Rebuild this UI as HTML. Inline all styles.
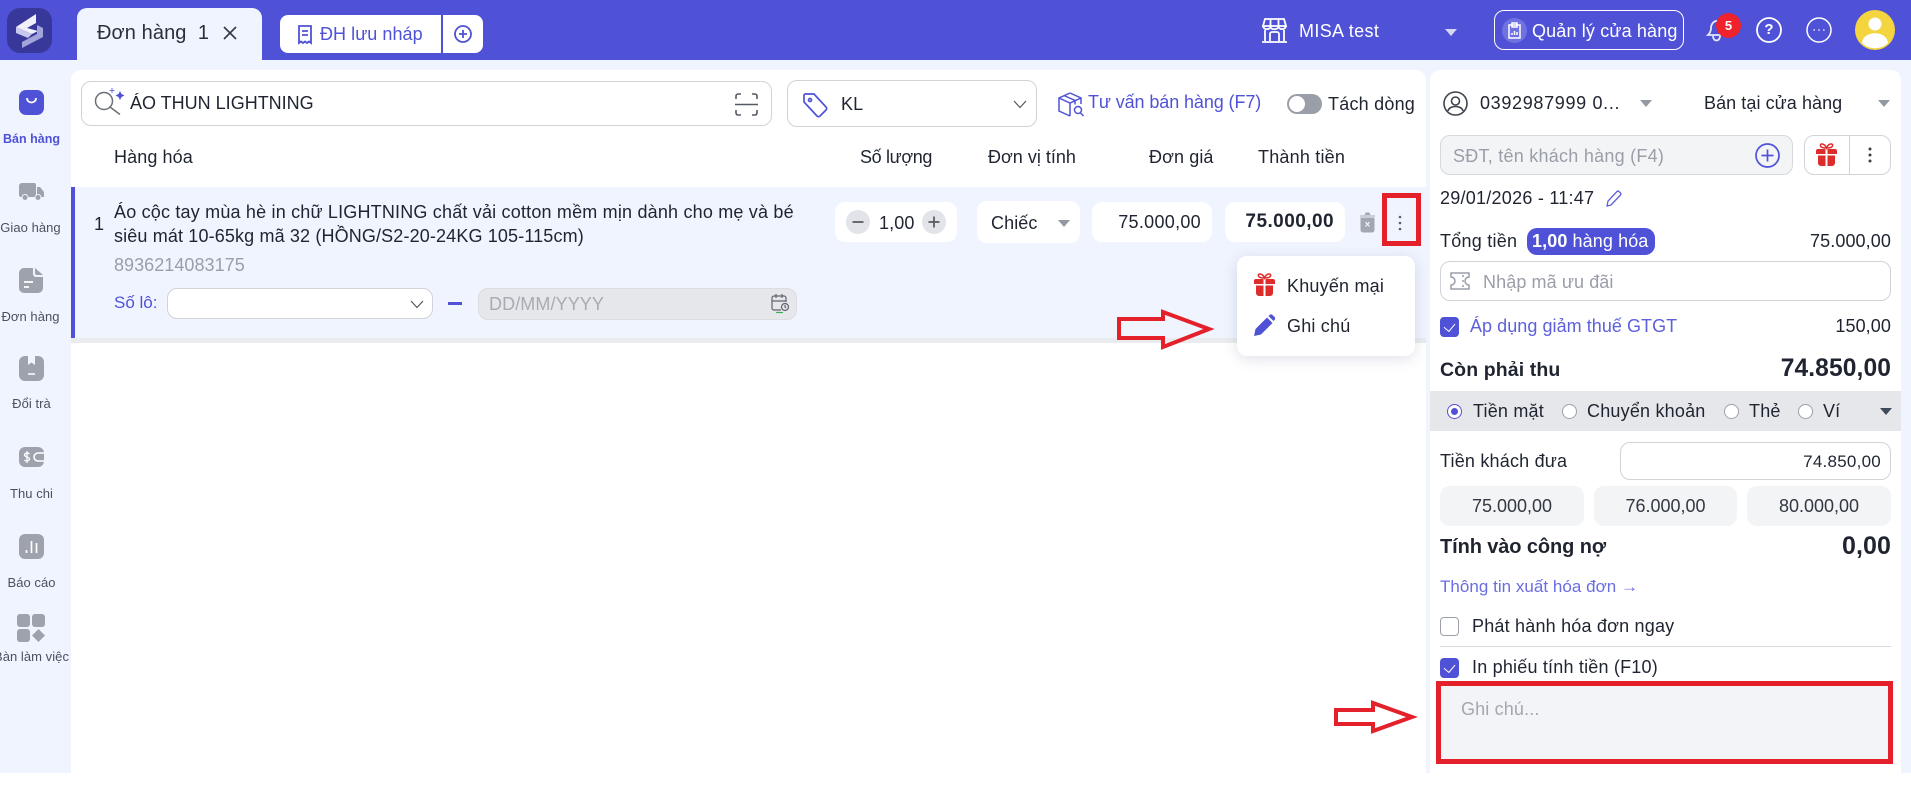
<!DOCTYPE html>
<html lang="vi"><head><meta charset="utf-8"><title>Đơn hàng</title>
<style>
*{box-sizing:border-box}
html,body{margin:0;padding:0;width:1911px;height:802px;overflow:hidden;background:#fff}
body{position:relative;font-family:"Liberation Sans",sans-serif;color:#1f2430;font-size:18px}
.b{position:absolute}
.t{position:absolute;white-space:nowrap;line-height:20px;height:20px;margin-top:-10px;letter-spacing:.1px}
.r{text-align:right}
.s{position:absolute;font-size:13px;letter-spacing:.05px;color:#4b5060;width:71px;text-align:center;line-height:16px;margin-top:-8px;white-space:nowrap}
svg.i{position:absolute;overflow:visible;fill:none}
.w{background:#fff;border-radius:10px}
.inp{background:#fff;border:1px solid #d1d3d8;border-radius:10px}
.q{background:#f3f4f6;border-radius:10px;text-align:center;line-height:40px;top:486px;height:40px;color:#333842}
.chk{position:absolute;width:19px;height:20px;border-radius:4px;background:#4f52d7}
.chk:after{content:"";position:absolute;left:6px;top:4px;width:6px;height:9px;border:solid #fff;border-width:0 1.3px 1.3px 0;transform:rotate(40deg)}
.rad{position:absolute;width:15px;height:15px;border-radius:50%;border:1px solid #9ca0a8;background:#fff;top:404px}
.car{position:absolute;width:0;height:0;border-left:6px solid transparent;border-right:6px solid transparent;border-top:7px solid #9398a3}
.p{color:#4f52d7}.g{color:#9a9ea8}
</style></head><body>
<!-- backgrounds -->
<div class="b" style="left:0;top:0;width:1911px;height:773px;background:#eff4fe"></div>
<div class="b" style="left:0;top:0;width:1911px;height:60px;background:#4f52d7"></div>

<!-- logo -->
<svg class="i" style="left:7px;top:8px" width="45" height="45" viewBox="0 0 45 45"><rect width="45" height="45" rx="13" fill="#38389b"/><path d="M9 19 29 6v9l-9 5 11 3-6 3-16-7z" fill="#f0f0fb"/><path d="M9 19v6l12 5 4-4z" fill="#c9c9ef"/><path d="M15 34v6l21-11v-9l-6-3v9z" fill="#a4a4dd"/></svg>

<!-- tabs -->
<div class="b" style="left:77px;top:8px;width:185px;height:52px;background:#eff4fe;border-radius:10px 10px 0 0"></div>
<div class="t" style="left:97px;top:33px;font-size:20px;color:#2b2f3a">Đơn hàng&nbsp; 1</div>
<svg class="i" style="left:223px;top:26px" width="14" height="14"><path d="M1 1l12 12M13 1 1 13" stroke="#333842" stroke-width="1.6"/></svg>
<div class="b w" style="left:280px;top:15px;width:161px;height:38px;border-radius:8px 0 0 8px"></div>
<div class="b w" style="left:443px;top:15px;width:40px;height:38px;border-radius:0 8px 8px 0"></div>
<svg class="i" style="left:298px;top:25px" width="14" height="20" stroke="#4f52d7" stroke-width="1.8"><path d="M1 1h12v17l-2-1.500-2 1.500-2-1.500-2 1.500-2-1.500-2 1.500zM4 6h6M4 10h6"/></svg>
<div class="t p" style="left:320px;top:34px;letter-spacing:.05px">ĐH lưu nháp</div>
<svg class="i" style="left:454px;top:25px" width="18" height="18" stroke="#4f52d7" stroke-width="1.8"><circle cx="9" cy="9" r="8"/><path d="M9 5v8M5 9h8"/></svg>

<!-- header right -->
<svg class="i" style="left:1262px;top:18px" width="25" height="25" viewBox="0 0 25 25" stroke="#fff" stroke-width="1.8"><path d="M3 1h19l2 7H1zM1 8c1 4 6 4 7.500 1 1 3 6.500 3 8 0 1.500 3 6.500 3 7.500-1M3 12v11M22 12v11M0 24h25M8 23v-7a2 2 0 0 1 2-2h5a2 2 0 0 1 2 2v7M8.500 1v8M16.500 1v8"/></svg>
<div class="t" style="left:1299px;top:31px;color:#fff;letter-spacing:.35px">MISA test</div>
<div class="car" style="left:1445px;top:29px;border-top-color:#d5d6f5"></div>
<div class="b" style="left:1494px;top:10px;width:190px;height:40px;border:1.500px solid #fff;border-radius:10px"></div>
<svg class="i" style="left:1502px;top:18px" width="25" height="25" viewBox="0 0 25 25"><circle cx="12.500" cy="12.500" r="12.500" fill="#6f72e0"/><path d="M7 7h11v13H7zM10 5h5v4h-5zM10 17v-2M12.500 17v-4M15 17v-3" stroke="#fff" stroke-width="1.500"/></svg>
<div class="t" style="left:1532px;top:31px;color:#fff;letter-spacing:.15px">Quản lý cửa hàng</div>
<svg class="i" style="left:1706px;top:19px" width="22" height="22" stroke="#e8e9fb" stroke-width="1.800"><path d="M2 16c2-2 3-4 3-7s2-7 6-7 6 4 6 7 0 5 2 7zM7 17c0 6 7 6 7 0"/></svg>
<div class="b" style="left:1716px;top:13px;width:25px;height:25px;border-radius:50%;background:#f0222c;color:#fff;font-weight:700;font-size:13px;line-height:25px;text-align:center">5</div>
<svg class="i" style="left:1756px;top:17px" width="26" height="26" stroke="#fff" stroke-width="1.800"><circle cx="13" cy="13" r="12"/></svg>
<div class="t" style="left:1764px;top:30px;width:10px;text-align:center;color:#fff;font-weight:700;font-size:15px">?</div>
<svg class="i" style="left:1806px;top:17px" width="26" height="26" stroke="#fff" stroke-width="1.500"><circle cx="13" cy="13" r="12"/><path d="M7.500 13h1.300M12.400 13h1.300M17.200 13h1.300"/></svg>
<svg class="i" style="left:1855px;top:10px" width="40" height="40" viewBox="0 0 40 40"><circle cx="20" cy="20" r="20" fill="#f5d53f"/><circle cx="20" cy="14" r="6.500" fill="#fff"/><path d="M7 33c1-13 25-13 26 0-7 7-19 7-26 0z" fill="#fff"/></svg>

<!-- sidebar -->
<svg class="i" style="left:19px;top:90px" width="25" height="25"><rect width="25" height="25" rx="7" fill="#4f52d7"/><path d="M8 8c0 6 9 6 9 0" stroke="#fff" stroke-width="1.800"/></svg>
<div class="s" style="left:-4px;top:139px;color:#4f52d7;font-weight:700;font-size:12.5px;letter-spacing:0">Bán hàng</div>
<svg class="i" style="left:19px;top:183px" width="25" height="18"><path d="M0 3a3 3 0 0 1 3-3h12a2 2 0 0 1 2 2v12H2a2 2 0 0 1-2-2zM18 4h3l4 5v5h-7z" fill="#9ea2ad"/><circle cx="6" cy="14.500" r="3" fill="#9ea2ad" stroke="#eff4fe"/><circle cx="19" cy="14.500" r="3" fill="#9ea2ad" stroke="#eff4fe"/></svg>
<div class="s" style="left:-5px;top:228px">Giao hàng</div>
<svg class="i" style="left:19px;top:268px" width="25" height="25"><path d="M5 0h9v6a3 3 0 0 0 3 3h7v11a5 5 0 0 1-5 5H5a5 5 0 0 1-5-5V5a5 5 0 0 1 5-5z" fill="#9ea2ad"/><path d="M16 0l8 7h-6a2 2 0 0 1-2-2z" fill="#9ea2ad"/><path d="M5 14h9M5 19h5" stroke="#fff" stroke-width="1.800"/></svg>
<div class="s" style="left:-5px;top:317px">Đơn hàng</div>
<svg class="i" style="left:19px;top:356px" width="25" height="25"><rect width="25" height="25" rx="6" fill="#9ea2ad"/><path d="M9 0h7v9l-3.500-2.500L9 9z" fill="#eff4fe"/><path d="M9 18h7" stroke="#fff" stroke-width="1.500"/></svg>
<div class="s" style="left:-4px;top:404px">Đổi trà</div>
<svg class="i" style="left:19px;top:447px" width="25" height="20"><rect width="25" height="20" rx="6" fill="#9ea2ad"/><path d="M25 6h-6a4 4 0 0 0 0 8h6" stroke="#fff" stroke-width="1.600"/><path d="M8 4v12M10.500 7c-1-1.500-5-1-5 1s5 2 5 4-4 2.500-5 1" stroke="#fff" stroke-width="1.300"/></svg>
<div class="s" style="left:-4px;top:494px">Thu chi</div>
<svg class="i" style="left:19px;top:534px" width="25" height="25"><rect width="25" height="25" rx="6" fill="#9ea2ad"/><path d="M7.500 19v-3M12.500 19V7M17.500 19V9" stroke="#fff" stroke-width="1.700"/></svg>
<div class="s" style="left:-4px;top:583px">Báo cáo</div>
<svg class="i" style="left:17px;top:614px" width="28" height="28"><rect width="13" height="13" rx="3" fill="#9ea2ad"/><rect x="15" width="13" height="13" rx="3" fill="#9ea2ad"/><rect y="15" width="13" height="13" rx="3" fill="#9ea2ad"/><path d="M21.500 15l6.500 6.500-6.500 6.500-6.500-6.500z" fill="#9ea2ad"/></svg>
<div class="s" style="left:-4px;top:657px;overflow:hidden;direction:rtl;width:73px"><span style="direction:ltr;unicode-bidi:embed">Bàn làm việc</span></div>

<!-- main card -->
<div class="b" style="left:71px;top:70px;width:1355px;height:703px;background:#fff;border-radius:10px 10px 0 0"></div>

<!-- search row -->
<div class="b inp" style="left:81px;top:81px;width:691px;height:45px"></div>
<svg class="i" style="left:94px;top:88px" width="30" height="30" stroke="#6b6f78" stroke-width="1.500"><circle cx="10" cy="13" r="8.500"/><path d="M16 19l10 7.500"/><path d="M18 0v5M15.500 2.500h5" stroke="#6f72e0" stroke-width="1"/><path d="M26 3l1.500 3 3 1.500-3 1.500-1.500 3-1.500-3-3-1.500 3-1.500z" fill="#4f52d7" stroke="none"/></svg>
<div class="t" style="left:130px;top:103px;letter-spacing:0">ÁO THUN LIGHTNING</div>
<svg class="i" style="left:735px;top:93px" width="23" height="23" stroke="#555963" stroke-width="1.600"><path d="M1 6V3a2 2 0 0 1 2-2h3M17 1h3a2 2 0 0 1 2 2v3M1 17v3a2 2 0 0 0 2 2h3M17 22h3a2 2 0 0 0 2-2v-3M0 11.500h23"/></svg>
<div class="b inp" style="left:787px;top:80px;width:250px;height:47px"></div>
<svg class="i" style="left:803px;top:93px" width="25" height="25" stroke="#4f52d7" stroke-width="1.700"><path d="M2 1h9l12 13a2 2 0 0 1 0 3l-6 6a2 2 0 0 1-3 0L2 10a2 2 0 0 1-1-2V2z"/><circle cx="7" cy="7" r="1.500"/></svg>
<div class="t" style="left:841px;top:104px">KL</div>
<svg class="i" style="left:1013px;top:100px" width="14" height="9" stroke="#555963" stroke-width="1.200"><path d="M1 1l6 6.500L13 1"/></svg>
<svg class="i" style="left:1058px;top:92px" width="27" height="25" stroke="#4f52d7" stroke-width="1.500"><path d="M12 1 1 6v13l11 5M12 1l11 5v6M1 6l11 5 11-5M12 11v13M6 3.500l11 5v4"/><circle cx="20" cy="18" r="3.500"/><path d="M22.500 21l3 3"/></svg>
<div class="t p" style="left:1088px;top:102px;letter-spacing:-.1px">Tư vấn bán hàng (F7)</div>
<div class="b" style="left:1287px;top:94px;width:35px;height:20px;border-radius:10px;background:#9a9ea8"></div>
<div class="b" style="left:1289px;top:96px;width:16px;height:16px;border-radius:50%;background:#fff"></div>
<div class="t" style="left:1328px;top:104px;letter-spacing:.22px">Tách dòng</div>

<!-- table header -->
<div class="t" style="left:114px;top:157px">Hàng hóa</div>
<div class="t" style="left:860px;top:157px;letter-spacing:-.35px">Số lượng</div>
<div class="t" style="left:988px;top:157px;letter-spacing:0">Đơn vị tính</div>
<div class="t" style="left:1149px;top:157px">Đơn giá</div>
<div class="t" style="left:1258px;top:157px;letter-spacing:.2px">Thành tiền</div>

<!-- row -->
<div class="b" style="left:71px;top:187px;width:1355px;height:151px;background:#eff4fe"></div>
<div class="b" style="left:71px;top:187px;width:4px;height:151px;background:#4f52d7"></div>
<div class="b" style="left:71px;top:338px;width:1355px;height:5px;background:#eaebee"></div>
<div class="t" style="left:94px;top:224px">1</div>
<div class="t" style="left:114px;top:212px;letter-spacing:.19px">Áo cộc tay mùa hè in chữ LIGHTNING chất vải cotton mềm mịn dành cho mẹ và bé</div>
<div class="t" style="left:114px;top:236px;letter-spacing:.14px">siêu mát 10-65kg mã 32 (HỒNG/S2-20-24KG 105-115cm)</div>
<div class="t g" style="left:114px;top:265px;letter-spacing:.05px">8936214083175</div>
<div class="t p" style="left:114px;top:303px;font-size:17px;letter-spacing:0">Số lô:</div>
<div class="b inp" style="left:167px;top:288px;width:266px;height:31px"></div>
<svg class="i" style="left:410px;top:300px" width="14" height="9" stroke="#555963" stroke-width="1.200"><path d="M1 1l6 6.500L13 1"/></svg>
<div class="b" style="left:448px;top:302px;width:14px;height:2.500px;background:#4f52d7"></div>
<div class="b" style="left:478px;top:288px;width:319px;height:32px;background:#e6e7eb;border:1px solid #dcdde1;border-radius:10px"></div>
<div class="t" style="left:489px;top:304px;color:#a8abb3">DD/MM/YYYY</div>
<svg class="i" style="left:771px;top:294px" width="19" height="20" stroke="#5f636c" stroke-width="1.200"><path d="M10 16H3a2 2 0 0 1-2-2V4a2 2 0 0 1 2-2h10a2 2 0 0 1 2 2v4M1 7h14M5 0v4M11 0v4"/><circle cx="14" cy="13" r="3.500"/><path d="M14 11v2l1 1"/><path d="M5 18.500h7" stroke="#3fae5a"/></svg>

<div class="b w" style="left:835px;top:202px;width:122px;height:40px"></div>
<div class="b" style="left:846px;top:210px;width:24px;height:24px;border-radius:50%;background:#e2e4e9"></div>
<div class="b" style="left:922px;top:210px;width:24px;height:24px;border-radius:50%;background:#e2e4e9"></div>
<svg class="i" style="left:846px;top:210px" width="100" height="24" stroke="#555963" stroke-width="1.700"><path d="M6.500 12h11M82.500 12h11M88 6.500v11"/></svg>
<div class="t" style="left:879px;top:223px">1,00</div>
<div class="b w" style="left:977px;top:201px;width:103px;height:42px"></div>
<div class="t" style="left:991px;top:223px">Chiếc</div>
<div class="car" style="left:1058px;top:220px"></div>
<div class="b w" style="left:1092px;top:202px;width:120px;height:40px"></div>
<div class="t r" style="right:710px;top:222px;letter-spacing:.3px">75.000,00</div>
<div class="b w" style="left:1225px;top:202px;width:120px;height:40px"></div>
<div class="t r" style="right:577px;top:222px;font-weight:700;font-size:19px;letter-spacing:.45px">75.000,00</div>
<svg class="i" style="left:1360px;top:213px" width="15" height="19"><path d="M1 5h13v12a2 2 0 0 1-2 2H3a2 2 0 0 1-2-2zM0 3h15M5 2l1-2h3l1 2" fill="#a3a7b2" stroke="#a3a7b2"/><path d="M5.500 9l4 4.500M9.500 9l-4 4.500" stroke="#eff4fe" stroke-width="1.200"/></svg>
<svg class="i" style="left:1398px;top:215px" width="4" height="16"><circle cx="2" cy="2" r="1.300" fill="#5a5f6a"/><circle cx="2" cy="8" r="1.300" fill="#5a5f6a"/><circle cx="2" cy="14" r="1.300" fill="#5a5f6a"/></svg>

<!-- right panel -->
<div class="b" style="left:1430px;top:70px;width:471px;height:703px;background:#fff;border-radius:10px 10px 0 0"></div>
<svg class="i" style="left:1443px;top:91px" width="25" height="25" stroke="#3f444e" stroke-width="1.600"><circle cx="12.500" cy="12.500" r="11.500"/><circle cx="12.500" cy="10" r="4"/><path d="M5 20c1-6 14-6 15 0"/></svg>
<div class="t" style="left:1480px;top:103px;letter-spacing:.67px">0392987999 0...</div>
<div class="car" style="left:1640px;top:100px"></div>
<div class="t" style="left:1704px;top:103px;letter-spacing:.07px">Bán tại cửa hàng</div>
<div class="car" style="left:1878px;top:100px"></div>

<div class="b" style="left:1440px;top:135px;width:353px;height:40px;background:#f3f4f6;border:1px solid #d6d8dc;border-radius:10px"></div>
<div class="t g" style="left:1453px;top:156px;letter-spacing:.25px">SĐT, tên khách hàng (F4)</div>
<svg class="i" style="left:1755px;top:143px" width="25" height="25" stroke="#4f52d7" stroke-width="1.700"><circle cx="12.500" cy="12.500" r="11.500"/><path d="M12.500 6.500v12M6.500 12.500h12"/></svg>
<div class="b inp" style="left:1804px;top:135px;width:87px;height:40px"></div>
<div class="b" style="left:1849px;top:135px;width:1px;height:40px;background:#d1d3d8"></div>
<svg class="i" style="left:1816px;top:143px" width="21" height="23"><path d="M2 6h17a2 2 0 0 1 2 2v3H0V8a2 2 0 0 1 2-2zM2 12.500h17V20a3 3 0 0 1-3 3H5a3 3 0 0 1-3-3z" fill="#dd2c2c"/><path d="M10.500 6v17" stroke="#fff" stroke-width="2"/><path d="M10.500 5c-2-5-7-5-6-2 .5 1.500 3 2 6 2 3 0 5.500-.5 6-2 1-3-4-3-6 2z" stroke="#dd2c2c" stroke-width="1.500"/></svg>
<svg class="i" style="left:1868px;top:147px" width="4" height="16"><circle cx="2" cy="2" r="1.500" fill="#3a3f4a"/><circle cx="2" cy="8" r="1.500" fill="#3a3f4a"/><circle cx="2" cy="14" r="1.500" fill="#3a3f4a"/></svg>

<div class="t" style="left:1440px;top:198px;letter-spacing:.25px">29/01/2026 - 11:47</div>
<svg class="i" style="left:1606px;top:190px" width="16" height="17" stroke="#5d60db" stroke-width="1.300"><path d="M1 16l1-5L11 1.500a1.500 1.500 0 0 1 2 0l1.500 1.500a1.500 1.500 0 0 1 0 2L5 15z"/></svg>

<div class="t" style="left:1440px;top:241px;letter-spacing:.25px">Tổng tiền</div>
<div class="b" style="left:1527px;top:228px;width:128px;height:27px;background:#4f52d7;border-radius:10px"></div>
<div class="t" style="left:1532px;top:241px;color:#fff"><b>1,00</b> hàng hóa</div>
<div class="t r" style="right:20px;top:241px">75.000,00</div>
<div class="b inp" style="left:1440px;top:261px;width:451px;height:40px"></div>
<svg class="i" style="left:1450px;top:272px" width="20" height="18" stroke="#9a9ea8" stroke-width="1.500"><path d="M1 1h18v4a4 4 0 0 0 0 8v4H1v-4a4 4 0 0 0 0-8zM13 3v2M13 8v2M13 13v2"/></svg>
<div class="t g" style="left:1483px;top:282px">Nhập mã ưu đãi</div>

<div class="chk" style="left:1440px;top:317px"></div>
<div class="t" style="left:1470px;top:326px;color:#5d60db;letter-spacing:.05px">Áp dụng giảm thuế GTGT</div>
<div class="t r" style="right:20px;top:326px">150,00</div>
<div class="t" style="left:1440px;top:370px;font-weight:700;font-size:19.5px">Còn phải thu</div>
<div class="t r" style="right:20px;top:369px;font-weight:700;font-size:24.6px">74.850,00</div>

<div class="b" style="left:1430px;top:391px;width:471px;height:40px;background:#e6e7eb"></div>
<div class="rad" style="left:1447px;border-color:#4f52d7"></div>
<div class="b" style="left:1451px;top:408px;width:7px;height:7px;border-radius:50%;background:#4f52d7"></div>
<div class="t" style="left:1473px;top:411px;letter-spacing:.2px">Tiền mặt</div>
<div class="rad" style="left:1562px"></div>
<div class="t" style="left:1587px;top:411px;letter-spacing:.2px">Chuyển khoản</div>
<div class="rad" style="left:1724px"></div>
<div class="t" style="left:1749px;top:411px;letter-spacing:.2px">Thẻ</div>
<div class="rad" style="left:1798px"></div>
<div class="t" style="left:1823px;top:411px">Ví</div>
<div class="car" style="left:1880px;top:408px;border-top-color:#3f4a5a"></div>

<div class="t" style="left:1440px;top:461px;letter-spacing:.2px">Tiền khách đưa</div>
<div class="b inp" style="left:1620px;top:442px;width:271px;height:38px"></div>
<div class="t r" style="right:30px;top:462px;font-size:17px;letter-spacing:.25px">74.850,00</div>
<div class="b q" style="left:1440px;width:144px">75.000,00</div>
<div class="b q" style="left:1594px;width:143px">76.000,00</div>
<div class="b q" style="left:1747px;width:144px">80.000,00</div>
<div class="t" style="left:1440px;top:547px;font-weight:700;font-size:20px;letter-spacing:-.1px">Tính vào công nợ</div>
<div class="t r" style="right:20px;top:546px;font-weight:700;font-size:25px">0,00</div>
<div class="t" style="left:1440px;top:587px;color:#6a6de0;font-size:17px;letter-spacing:.03px">Thông tin xuất hóa đơn →</div>
<div class="b" style="left:1440px;top:617px;width:19px;height:19px;border:1px solid #9ca0a8;border-radius:4px;background:#fff"></div>
<div class="t" style="left:1472px;top:626px;letter-spacing:.2px">Phát hành hóa đơn ngay</div>
<div class="b" style="left:1440px;top:646px;width:451px;height:1px;background:#d8dadf"></div>
<div class="chk" style="left:1440px;top:658px"></div>
<div class="t" style="left:1472px;top:667px;letter-spacing:.2px">In phiếu tính tiền (F10)</div>
<div class="b" style="left:1436px;top:681px;width:457px;height:83px;background:#f3f4f8"></div>
<div class="t" style="left:1461px;top:709px;color:#a4a7b0;letter-spacing:.15px">Ghi chú...</div>

<!-- popup -->
<div class="b" style="left:1237px;top:256px;width:178px;height:100px;background:#fff;border-radius:10px;box-shadow:0 3px 14px rgba(60,70,110,.16)"></div>
<svg class="i" style="left:1254px;top:273px" width="21" height="23"><path d="M2 6h17a2 2 0 0 1 2 2v3H0V8a2 2 0 0 1 2-2zM2 12.500h17V20a3 3 0 0 1-3 3H5a3 3 0 0 1-3-3z" fill="#dd2c2c"/><path d="M10.500 6v17" stroke="#fff" stroke-width="2"/><path d="M10.500 5c-2-5-7-5-6-2 .5 1.500 3 2 6 2 3 0 5.500-.5 6-2 1-3-4-3-6 2z" stroke="#dd2c2c" stroke-width="1.500"/></svg>
<div class="t" style="left:1287px;top:286px;letter-spacing:.2px">Khuyến mại</div>
<svg class="i" style="left:1254px;top:315px" width="21" height="21"><path d="M0 21l1.500-7L13 2.500l5.500 5.500L7 19.500z" fill="#4f52d7"/><path d="M14.500 1l1-1a2 2 0 0 1 3 0l2 2a2 2 0 0 1 0 3l-1 1z" fill="#4f52d7"/></svg>
<div class="t" style="left:1287px;top:326px;letter-spacing:.2px">Ghi chú</div>

<!-- annotations -->
<svg class="i" style="left:0;top:0" width="1911" height="802" fill="none" stroke="#e4202a">
<rect x="1384.500" y="195.500" width="34" height="48" stroke-width="5"/>
<rect x="1438.500" y="683.500" width="452" height="78" stroke-width="5"/>
<path d="M1119 319h44v-7l46 17-46 18v-9h-44z" stroke-width="4"/>
<path d="M1336 710h37v-7l39 14-39 14v-7h-37z" stroke-width="4"/>
</svg>
</body></html>
